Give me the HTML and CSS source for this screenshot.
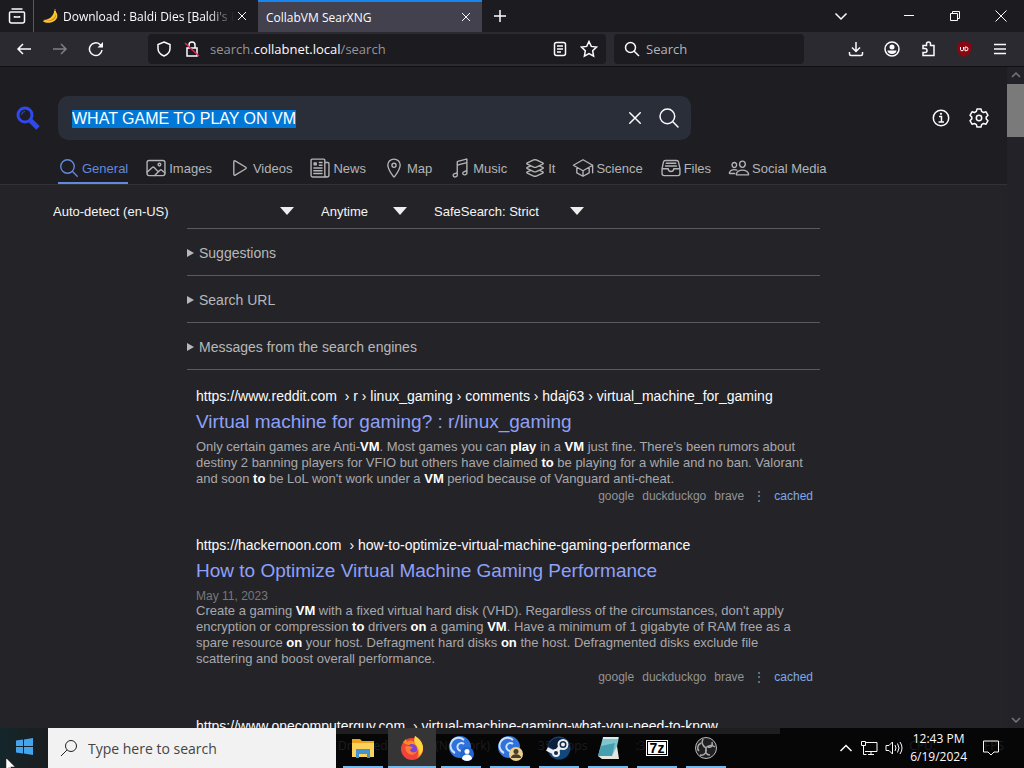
FILE: index.html
```
<!DOCTYPE html>
<html lang="en">
<head>
    <meta charset="UTF-8">
    <meta name="viewport" content="width=device-width, initial-scale=1.0">
    <title>CollabVM SearXNG</title>
    <link rel="stylesheet" href="styles.css">
</head>
<body>
    <div class="tab-bar">
        <button class="icon-btn view-btn" aria-label="Firefox View">
            <svg width="18" height="18" viewBox="0 0 18 18"><path d="M3.500 2h11M2.500 5h13q1 0 1 1v8q0 2-2 2h-11q-2 0-2-2V6q0-1 1-1zM6.500 9v1h5V9"/></svg>
        </button>
        <div class="tab">
            <svg class="banana" width="17" height="16" viewBox="0 0 17 16"><path fill="#f9c62f" d="M12 1l2 .5 0 2.500c3 4 1 9-5 10.500-3 .7-6 .2-8-1l.5-1.500C6 12 11 9 12 4z"/><path fill="#d5831d" d="M2 12.500c5 1 11-1 12-7 1 6-5 9-12 7z"/><path fill="#6b4413" d="M12 1l2 .5v1.500l-2-.3zM1 12l1.500.5-.5 1-1-.3z"/></svg>
            <span class="tab-title faded">Download : Baldi Dies [Baldi's Ba</span>
            <button class="icon-btn tab-close" aria-label="Close tab"><svg width="10" height="10" viewBox="0 0 10 10"><path d="M1 1l8 8M9 1L1 9"/></svg></button>
        </div>
        <div class="tab active">
            <span class="tab-title">CollabVM SearXNG</span>
            <button class="icon-btn tab-close" aria-label="Close tab"><svg width="10" height="10" viewBox="0 0 10 10"><path d="M1 1l8 8M9 1L1 9"/></svg></button>
        </div>
        <button class="icon-btn new-tab" aria-label="New tab"><svg width="14" height="14" viewBox="0 0 14 14"><path d="M7 1v12M1 7h12"/></svg></button>
        <div class="window-buttons">
            <button class="icon-btn list-tabs" aria-label="List all tabs"><svg width="14" height="14" viewBox="0 0 14 14"><path d="M1.500 4.500L7 10l5.500-5.500"/></svg></button>
            <button class="icon-btn" aria-label="Minimize"><svg class="thin" width="12" height="12" viewBox="0 0 12 12"><path d="M1 5.500h10"/></svg></button>
            <button class="icon-btn" aria-label="Restore"><svg class="thin" width="12" height="12" viewBox="0 0 12 12"><path d="M1.500 3.500h7v7h-7zM3.500 3.500v-2h7v7h-2"/></svg></button>
            <button class="icon-btn" aria-label="Close"><svg class="thin" width="12" height="12" viewBox="0 0 12 12"><path d="M.5.5l11 11M11.500.5l-11 11"/></svg></button>
        </div>
    </div>

    <div class="toolbar">
        <button class="icon-btn" aria-label="Back"><svg width="16" height="16" viewBox="0 0 16 16"><path d="M15 8H2M7 3L2 8l5 5"/></svg></button>
        <button class="icon-btn disabled" aria-label="Forward"><svg width="16" height="16" viewBox="0 0 16 16"><path d="M1 8h13M9 3l5 5-5 5"/></svg></button>
        <button class="icon-btn" aria-label="Reload"><svg width="16" height="16" viewBox="0 0 16 16"><path d="M14 9A6.300 6.300 0 1 1 12 3.500L14 5.500"/><path fill="currentColor" d="M15 1v5.500h-5.500z" stroke="none"/></svg></button>
        <div class="url-bar">
            <svg width="16" height="16" viewBox="0 0 16 16"><path d="M8 1l6 2.500v4c0 3.500-2.500 6-6 7.500-3.500-1.500-6-4-6-7.500v-4z"/></svg>
            <svg width="16" height="16" viewBox="0 0 16 16"><path d="M3 7h10v8H3zM5 7V4a3 3 0 0 1 6 0v3"/><path stroke="#e22850" d="M1 2l14 13"/></svg>
            <span class="url">search.<b>collabnet.local</b>/search</span>
            <svg class="reader" width="16" height="16" viewBox="0 0 16 16"><rect x="2.500" y="1.500" width="11" height="13" rx="2"/><path d="M5 5h6M5 8h6M5 11h4"/></svg>
            <svg width="18" height="18" viewBox="0 0 18 18"><path d="M9 1.500l2.300 4.900 5.200.7-3.800 3.700.9 5.300L9 13.500l-4.600 2.600.9-5.300L1.500 7.100l5.200-.7z"/></svg>
        </div>
        <div class="search-bar">
            <svg width="16" height="16" viewBox="0 0 16 16"><circle cx="6.500" cy="6.500" r="5"/><path d="M10 10l5 5"/></svg>
            <input type="text" placeholder="Search" aria-label="Search the web">
        </div>
        <div class="toolbar-end">
            <button class="icon-btn" aria-label="Downloads"><svg width="16" height="16" viewBox="0 0 16 16"><path d="M8 1v9M4 6.500l4 4 4-4M1.500 11v2q0 1.500 1.500 1.500h10q1.500 0 1.500-1.500v-2"/></svg></button>
            <button class="icon-btn" aria-label="Account"><svg width="16" height="16" viewBox="0 0 16 16"><circle cx="8" cy="8" r="7"/><circle cx="8" cy="6" r="2.500" fill="currentColor" stroke="none"/><path fill="currentColor" stroke="none" d="M3.500 9.500h9c0 2-2 3.500-4.500 3.500s-4.500-1.500-4.500-3.500z"/></svg></button>
            <button class="icon-btn" aria-label="Extensions"><svg width="16" height="16" viewBox="0 0 16 16"><path d="M6.500 4.500V3a2 2 0 0 1 4 0v1.500h3.500v10H3v-3h2a2 2 0 0 0 0-4H3v-3z"/></svg></button>
            <button class="icon-btn" aria-label="uBlock Origin"><svg width="16" height="16" viewBox="0 0 16 16"><path fill="#8a0610" stroke="none" d="M8 0l7 2.500V8c0 4-3 6.500-7 8-4-1.500-7-4-7-8V2.500z"/><path stroke="#fff" stroke-width="1" d="M4.500 6v2.500q0 1.300 1.500 1.300T7.500 8.500V6M9 6h1q2 0 2 1.900T10 9.800H9z"/></svg></button>
            <button class="icon-btn" aria-label="Menu"><svg width="14" height="14" viewBox="0 0 14 14"><path d="M1 2.500h12M1 7h12M1 11.500h12"/></svg></button>
        </div>
    </div>

    <div class="viewport">
        <div class="page">
            <header class="search-header">
                <div class="search-row">
                    <a href="#" class="logo" aria-label="SearXNG"><svg width="24" height="24" viewBox="0 0 24 24"><circle cx="9" cy="9" r="7" stroke="#3048f0" stroke-width="3"/><path stroke="#3048f0" stroke-width="1" d="M5.500 9A3.500 3.500 0 0 1 9 5.500"/><path stroke="#3048f0" stroke-width="5" d="M14.500 14.500l7.500 7.500"/></svg></a>
                    <form class="search-box">
                        <input type="text" id="q" value="WHAT GAME TO PLAY ON VM" aria-label="Search for">
                        <button type="reset" class="icon-btn" aria-label="Clear"><svg width="24" height="24" viewBox="0 0 512 512"><path d="M368 368L144 144M368 144L144 368"/></svg></button>
                        <button type="submit" class="icon-btn" aria-label="Search"><svg width="24" height="24" viewBox="0 0 512 512"><path d="M221 64a157 157 0 1 0 157 157A157 157 0 0 0 221 64zM338 338l110 110"/></svg></button>
                    </form>
                    <nav class="page-links">
                        <a href="#" aria-label="About"><svg width="20" height="20" viewBox="0 0 20 20"><circle cx="10" cy="10" r="7.700"/><path d="M8 8.500h2.500V14M7.500 14h5.500"/><circle cx="10" cy="5.800" r="1.100" fill="currentColor" stroke="none"/></svg></a>
                        <a href="#" aria-label="Preferences"><svg width="20" height="20" viewBox="0 0 20 20"><circle cx="10" cy="10" r="2.700"/><path stroke-linejoin="round" d="M8 .9h4l.6 2.500 1.900 1.100 2.500-.7 2 3.500-1.800 1.800v1.800l1.800 1.800-2 3.500-2.500-.7-1.900 1.100-.6 2.500H8l-.6-2.500-1.900-1.100-2.500.7-2-3.500 1.800-1.800V9.100L1 7.300l2-3.500 2.500.7 1.900-1.100z"/></svg></a>
                    </nav>
                </div>
                <nav class="categories">
                    <a href="#" class="selected"><svg viewBox="0 0 512 512"><path d="M221 64a157 157 0 1 0 157 157A157 157 0 0 0 221 64zM338 338l110 110"/></svg>General</a>
                    <a href="#"><svg viewBox="0 0 512 512"><rect x="48" y="80" width="416" height="352" rx="48"/><circle cx="336" cy="176" r="32"/><path d="M304 335.790l-90.660-90.490a32 32 0 0 0-43.870-1.300L48 352M224 432l123.340-123.340a32 32 0 0 1 43.110-2L464 368"/></svg>Images</a>
                    <a href="#"><svg viewBox="0 0 512 512"><path d="M112 111v290c0 17.440 17 28.520 31 20.160l247.900-148.370c12.120-7.250 12.120-26.330 0-33.580L143 90.840c-14-8.360-31 2.720-31 20.160z"/></svg>Videos</a>
                    <a href="#"><svg viewBox="0 0 512 512"><path d="M368 416V72a24 24 0 0 0-24-24H72a24 24 0 0 0-24 24v352a40 40 0 0 0 40 40h328M416 464a48 48 0 0 1-48-48V128h72a24 24 0 0 1 24 24v264a48 48 0 0 1-48 48zM240 128h64M240 192h64M112 256h192M112 320h192M112 384h192"/><path fill="currentColor" d="M120 136h48v48h-48z"/></svg>News</a>
                    <a href="#"><svg viewBox="0 0 512 512"><path d="M256 48c-79.500 0-144 61.390-144 137 0 87 96 224.870 131.250 272.490a15.770 15.770 0 0 0 25.500 0C304 409.890 400 272.070 400 185c0-75.610-64.500-137-144-137z"/><circle cx="256" cy="192" r="48"/></svg>Map</a>
                    <a href="#"><svg viewBox="0 0 512 512"><path d="M192 218v-6c0-14.840 10-27 24.240-30.590l174.590-46.680A20 20 0 0 1 416 154v22M416 296v80c0 13.910-8.930 25.590-22 30l-22 8c-25.900 8.720-52-10.420-52-38a33.370 33.370 0 0 1 23-32l51-18.150c13.070-4.400 22-15.940 22-29.850V58a10 10 0 0 0-12.600-9.610L204 102a16.480 16.480 0 0 0-12 16v226c0 13.910-8.930 25.600-22 30l-52 18c-13.880 4.680-22 17.220-22 32 0 27.580 26.520 46.550 52 38l22-8c13.070-4.400 22-16.080 22-30v-80"/></svg>Music</a>
                    <a href="#"><svg viewBox="0 0 512 512"><path d="M434.800 137.650l-149.360-68.100c-16.190-7.400-42.690-7.400-58.880 0L77.300 137.650c-17.600 8-17.600 21.090 0 29.090l148 67.500c16.890 7.700 44.690 7.700 61.580 0l148-67.500c17.520-8 17.520-21.100-.08-29.090zM160 308.520l-82.700 37.110c-17.600 8-17.600 21.100 0 29.100l148 67.500c16.890 7.690 44.690 7.690 61.580 0l148-67.500c17.600-8 17.600-21.100 0-29.100l-79.940-38.470M160 204.480l-82.800 37.160c-17.600 8-17.600 21.100 0 29.100l148 67.490c16.890 7.700 44.690 7.700 61.580 0l148-67.490c17.700-8 17.700-21.100.1-29.100L352 204.480"/></svg>It</a>
                    <a href="#"><svg viewBox="0 0 512 512"><path d="M32 192L256 64l224 128-224 128zM112 240v128l144 80 144-80V240M480 368V192M256 320v128"/></svg>Science</a>
                    <a href="#"><svg viewBox="0 0 512 512"><path d="M384 80H128c-26 0-43 14-48 40L48 272v112a48 48 0 0 0 48 48h320a48 48 0 0 0 48-48V272l-32-152c-5-27-23-40-48-40zM48 272h144M320 272h144M192 272a64 64 0 0 0 128 0M144 144h224M128 208h256"/></svg>Files</a>
                    <a href="#"><svg viewBox="0 0 512 512"><path d="M402 168c-3 41-33 72-66 72s-63-31-66-72c-3-42 26-72 66-72s69 30 66 72zM336 304c-65 0-128 32-143.500 95.400-2 8.300 3 16.600 11.700 16.600h263.600c8.600 0 13.800-8.300 11.700-16.600C464 335 401 304 336 304zM200 186c-2.300 32.500-26.700 58-53 58s-50.700-25.500-53-58c-2.400-34 21.300-58 53-58s55.400 25 53 58zM206 306c-18-8.300-38-11.400-59-11.400-52 0-102 25.800-114.600 76.200-1.700 6.600 2.500 13.200 9.300 13.200H154"/></svg>Social Media</a>
                </nav>
            </header>

            <main class="results">
                <div class="filters">
                    <select class="language" aria-label="Language"><option>Auto-detect (en-US)</option></select>
                    <select class="time-range" aria-label="Time range"><option>Anytime</option></select>
                    <select class="safesearch" aria-label="SafeSearch"><option>SafeSearch: Strict</option></select>
                </div>
                <div class="column">
                    <details><summary>Suggestions</summary></details>
                    <details><summary>Search URL</summary></details>
                    <details><summary>Messages from the search engines</summary></details>

                    <article class="result">
                        <a href="#" class="result-url"><span>https://www.reddit.com</span> › r › linux_gaming › comments › hdaj63 › virtual_machine_for_gaming</a>
                        <h3><a href="#">Virtual machine for gaming? : r/linux_gaming</a></h3>
                        <p class="content">Only certain games are Anti-<b>VM</b>. Most games you can <b>play</b> in a <b>VM</b> just fine. There's been rumors about<br>destiny 2 banning players for VFIO but others have claimed <b>to</b> be playing for a while and no ban. Valorant<br>and soon <b>to</b> be LoL won't work under a <b>VM</b> period because of Vanguard anti-cheat.</p>
                        <div class="engines"><span>google</span><span>duckduckgo</span><span>brave</span><span class="dots">⋮</span><a href="#">cached</a></div>
                    </article>

                    <article class="result">
                        <a href="#" class="result-url"><span>https://hackernoon.com</span> › how-to-optimize-virtual-machine-gaming-performance</a>
                        <h3><a href="#">How to Optimize Virtual Machine Gaming Performance</a></h3>
                        <time datetime="2023-05-11">May 11, 2023</time>
                        <p class="content">Create a gaming <b>VM</b> with a fixed virtual hard disk (VHD). Regardless of the circumstances, don't apply<br>encryption or compression <b>to</b> drivers <b>on</b> a gaming <b>VM</b>. Have a minimum of 1 gigabyte of RAM free as a<br>spare resource <b>on</b> your host. Defragment hard disks <b>on</b> the host. Defragmented disks exclude file<br>scattering and boost overall performance.</p>
                        <div class="engines"><span>google</span><span>duckduckgo</span><span>brave</span><span class="dots">⋮</span><a href="#">cached</a></div>
                    </article>

                    <article class="result">
                        <a href="#" class="result-url"><span>https://www.onecomputerguy.com</span> › virtual-machine-gaming-what-you-need-to-know</a>
                    </article>
                </div>
            </main>
        </div>
        <div class="scrollbar">
            <svg width="10" height="8" viewBox="0 0 10 8"><path d="M1 6l4-4 4 4"/></svg>
            <div class="thumb"></div>
            <svg width="10" height="8" viewBox="0 0 10 8"><path d="M1 2l4 4 4-4"/></svg>
        </div>
    </div>

    <footer class="taskbar">
        <div class="ghost-status"><span>Dropped Frames (Network)</span><span>35 drops</span><span>:39</span><span>CPU:</span><span>FPS</span></div>
        <button class="start" aria-label="Start"><svg width="17" height="17" viewBox="0 0 17 17"><path fill="#45a5ec" stroke="none" d="M0 2.500l7-1V8H0zM8 1.400L17 0v8H8zM0 9h7v6.500l-7-1zM8 9h9v8l-9-1.400z"/></svg></button>
        <label class="task-search">
            <svg width="18" height="18" viewBox="0 0 18 18"><circle cx="11" cy="7" r="5.500"/><path d="M7 11l-6 6"/></svg>
            <input type="text" placeholder="Type here to search">
        </label>
        <div class="apps">
            <button aria-label="File Explorer"><svg viewBox="0 0 26 26"><path fill="#e9a520" d="M2 4h8l2 2h12v4H2z"/><path fill="#fbd15b" d="M2 8h22v14H2z"/><path fill="#4293cf" d="M6 14h14v9h-3v-4H9v4H6z"/></svg></button>
            <button class="current" aria-label="Firefox"><svg viewBox="0 0 26 26"><circle cx="13" cy="14" r="11" fill="#f0433b"/><path fill="#ff8b25" d="M4 7l3-3 1 3c3-2 5-2 7 0l1-6c5 3 8 8 8 13 0 4-3 8-6 9 2-5 1-9-2-11-4-3-9-1-12-5z"/><path fill="#ffd53f" d="M16 1c5 3 8 7 8 12 0 3-2 6-4 8 1-5-1-9-3-11-2-3-2-6-1-9z"/><circle cx="13" cy="14" r="5" fill="#7b43d6"/><path fill="#ff7a2e" d="M6 12c3-2 6 0 8 0l-3 3c1 3 5 3 7 1-2 6-11 5-12-4z"/></svg></button>
            <button aria-label="CollabVM Client"><svg viewBox="0 0 26 26"><circle cx="12" cy="12" r="11" fill="#2f73da"/><path fill="none" stroke="#cfe1ff" stroke-width="2" d="M16 5A8 8 0 1 0 7 18M16 9a4 4 0 1 0-3 7"/><circle cx="19" cy="19" r="7" fill="#2364cf"/><circle cx="19" cy="16.500" r="2.500" fill="#fff"/><path fill="#fff" d="M14 24c0-6 10-6 10 0-3 2.500-7 2.500-10 0z"/></svg></button>
            <button aria-label="CollabVM Admin"><svg viewBox="0 0 26 26"><circle cx="12" cy="12" r="11" fill="#2f73da"/><path fill="none" stroke="#cfe1ff" stroke-width="2" d="M16 5A8 8 0 1 0 7 18M16 9a4 4 0 1 0-3 7"/><circle cx="19" cy="19" r="7" fill="#ecd08d"/><circle cx="19" cy="16.500" r="2.500" fill="#4a3b2c"/><path fill="#4a3b2c" d="M14 23c0-5 10-5 10 0z"/></svg></button>
            <button aria-label="Steam"><svg viewBox="0 0 26 26"><circle cx="13" cy="13" r="11.500" fill="#12477c"/><path fill="#0b1e3b" d="M2 11a11.500 11.500 0 0 1 22 0c-6 5-14 6-22 0z"/><path stroke="#eee" stroke-width="4" d="M1 14l8 4 7-8"/><circle cx="17" cy="9.500" r="4.500" fill="#12294b" stroke="#eee" stroke-width="2"/><circle cx="17" cy="9.500" r="2" fill="#eee"/><circle cx="10" cy="18" r="3" fill="#12294b" stroke="#eee" stroke-width="2"/></svg></button>
            <button aria-label="Notepad"><svg viewBox="0 0 26 26"><path fill="#81c4ce" d="M8 2h16l-4 19H3z"/><path fill="#459fae" d="M6 11l14-3-3 13H3z"/><path stroke="#d5eef1" stroke-width="2" d="M8 3h15"/><path fill="#e6e6de" d="M3 21l14 0 5-10 2 13H7z"/></svg></button>
            <button aria-label="7-Zip"><svg viewBox="0 0 26 26"><path fill="#fff" d="M2 5h22v16H2z"/><path fill="#000" d="M3 6h20v14H3z"/><path fill="#fff" d="M4 7h18v12H4z"/><text class="zip" x="13" y="18" text-anchor="middle">7z</text></svg></button>
            <button aria-label="OBS Studio"><svg viewBox="0 0 26 26"><circle cx="13" cy="13" r="10.500" fill="#202023" stroke="#bbb" stroke-width="1"/><g fill="none" stroke="#aaa" stroke-width="1.500"><path d="M10 4c-2 4 0 7 3 9M22 12c-4-3-8-1-9 1M7 20c5 1 7-3 6-7M8 8c-4 2-4 6-2 8M19 7c1 4-1 6-4 5M17 20c-4 0-5-3-4-6"/></g></svg></button>
        </div>
        <div class="tray">
            <svg class="expand" width="14" height="14" viewBox="0 0 14 14"><path d="M1.500 10L7 4.500l5.500 5.500"/></svg>
            <svg width="18" height="16" viewBox="0 0 18 16"><path d="M5 2.500h12v9H5M8 14.500h6M11 11.500v3M1.500 1.500h4v4h-4zM3.500 5.500v9h3"/></svg>
            <svg width="18" height="16" viewBox="0 0 18 16"><path d="M1 5.500h3L7.500 2v12L4 10.500H1zM10 5q2 3 0 6M12.500 3.500q3 4.500 0 9M15 2q4 6 0 12"/></svg>
            <div class="clock"><span>12:43 PM</span><span>6/19/2024</span></div>
            <svg width="18" height="18" viewBox="0 0 18 18"><path d="M1.500 2h15v11H12l-3 3-3-3H1.500z"/></svg>
        </div>
    </footer>
    <svg class="cursor" width="12" height="18" viewBox="0 0 12 18"><path fill="#fff" stroke="#222" d="M.5.5v15l3.500-3 3 6 2.500-1-3-6h5z"/></svg>

    <script>
        const query = document.getElementById('q');
        query.focus();
        query.select();
    </script>
</body>
</html>
```
FILE: styles.css
```
* {
    margin: 0;
    padding: 0;
    box-sizing: border-box;
}

body {
    display: flex;
    flex-direction: column;
    height: 100vh;
    overflow: hidden;
    background-color: #1e1e22;
    color: #fbfbfe;
    font-family: "Open Sans", "Noto Sans", sans-serif;
    font-size: 12px;
}

svg {
    flex-shrink: 0;
    fill: none;
    stroke: currentColor;
    stroke-width: 1.5;
}

svg.thin {
    stroke-width: 1;
}

a {
    color: inherit;
    text-decoration: none;
}

input, button, select {
    font: inherit;
    color: inherit;
    background: none;
    border: none;
    outline: none;
}

.icon-btn {
    display: flex;
    align-items: center;
    justify-content: center;
}

/* Browser tabs */
.tab-bar {
    display: flex;
    height: 32px;
    flex-shrink: 0;
    background-color: #1c1b20;
}

.view-btn {
    width: 34px;
    border-right: 1px solid #59585f;
}

.tab {
    display: flex;
    align-items: center;
    width: 224px;
    padding: 0 8px;
    gap: 4px;
}

.tab.active {
    background-color: #42414d;
    border-top: 2px solid #1687f0;
}

.banana {
    stroke: none;
}

.tab-title {
    flex: 1;
    overflow: hidden;
    white-space: nowrap;
}

.tab-title.faded {
    margin-right: -4px;
    mask-image: linear-gradient(to right, #000 85%, transparent);
}

.tab-close {
    width: 16px;
    height: 16px;
}

.tab-close svg {
    stroke-width: 1;
}

.new-tab {
    width: 36px;
}

.window-buttons {
    display: flex;
    margin-left: auto;
}

.window-buttons .icon-btn {
    width: 46px;
}

.window-buttons .list-tabs {
    width: 36px;
    margin-right: 27px;
}

/* Navigation toolbar */
.toolbar {
    display: flex;
    align-items: center;
    height: 35px;
    flex-shrink: 0;
    padding: 0 6px;
    background-color: #2b2a30;
    border-bottom: 1px solid #101014;
}

.toolbar .icon-btn {
    width: 36px;
    height: 32px;
}

.disabled {
    opacity: 0.4;
}

.url-bar, .search-bar {
    display: flex;
    align-items: center;
    height: 30px;
    background-color: #1c1b20;
    border-radius: 4px;
}

.url-bar {
    flex: 1;
    gap: 12px;
    margin-left: 34px;
    padding: 0 8px;
}

.url {
    flex: 1;
    margin-left: -2px;
    color: #96959b;
    font-size: 13px;
}

.url b {
    color: #fbfbfe;
    font-weight: normal;
}

.search-bar {
    width: 190px;
    gap: 6px;
    margin-left: 8px;
    padding: 0 10px;
}

.search-bar input {
    width: 100%;
    font-size: 13px;
}

.search-bar input::placeholder {
    color: #b5b4ba;
}

.toolbar-end {
    display: flex;
    margin-left: 34px;
}

/* Search page */
.viewport {
    display: flex;
    flex: 1;
    min-height: 0;
    font-family: "Liberation Sans", Arial, sans-serif;
}

.page {
    flex: 1;
    min-width: 0;
    overflow: hidden;
    background-color: #242428;
}

.search-header {
    padding-top: 29px;
    background-color: #1e1e22;
    border-bottom: 1px solid #333337;
}

.search-row {
    display: flex;
    align-items: center;
    height: 44px;
}

.logo {
    display: flex;
    width: 58px;
    padding-left: 16px;
}

.search-box {
    display: flex;
    align-items: center;
    width: 633px;
    height: 44px;
    padding: 0 10px 0 14px;
    gap: 10px;
    background-color: #2a2e38;
    border-radius: 10px;
}

.search-box input {
    flex: 1;
    padding-top: 2px;
    font-size: 16px;
}

.search-box input::selection {
    background-color: #0078d7;
    color: #fff;
}

.search-box svg, .categories svg {
    stroke-width: 32;
    stroke-linecap: round;
    stroke-linejoin: round;
}

.page-links {
    display: flex;
    gap: 18px;
    margin-left: auto;
    padding-right: 18px;
}

.page-links svg {
    display: block;
}

.categories {
    display: flex;
    gap: 17px;
    margin-left: 58px;
    padding-top: 14px;
    color: #b4b4b6;
    font-size: 13px;
}

.categories a {
    display: flex;
    align-items: center;
    gap: 2px;
    height: 30px;
    border-bottom: 2px solid transparent;
    white-space: nowrap;
}

.categories svg {
    width: 22px;
    height: 22px;
}

.categories .selected {
    color: #6389dc;
    border-bottom-color: #6389dc;
}

.filters {
    display: flex;
    gap: 27px;
    margin-left: 53px;
    padding: 16px 0 7px;
    color: #f4f4f5;
    font-size: 13px;
}

.filters select {
    height: 20px;
    appearance: none;
    background: url("data:image/svg+xml,%3Csvg xmlns='http://www.w3.org/2000/svg' width='14' height='8'%3E%3Cpath fill='%23eee' d='M0 0h14L7 8z'/%3E%3C/svg%3E") no-repeat right center;
}

.language {
    width: 241px;
}

.time-range {
    width: 86px;
}

.safesearch {
    width: 150px;
}

.column {
    width: 633px;
    margin-left: 187px;
    border-top: 1px solid #5a5a5e;
}

details {
    border-bottom: 1px solid #5a5a5e;
    color: #b8b8ba;
    font-size: 14px;
}

summary {
    display: flex;
    align-items: center;
    gap: 5px;
    height: 46px;
    padding-top: 1px;
}

summary::before {
    content: "";
    border-left: 7px solid #b8b8ba;
    border-top: 4px solid transparent;
    border-bottom: 4px solid transparent;
}

.result {
    padding: 16px 7px 16px 9px;
}

.result + .result {
    padding-top: 15px;
}

.result-url {
    display: block;
    font-size: 14px;
    line-height: 21px;
    white-space: nowrap;
}

.result-url span {
    margin-right: 4px;
}

.result h3 {
    color: #8fa0f8;
    font-size: 19px;
    font-weight: normal;
    line-height: 30px;
}

.result time {
    display: block;
    margin-top: 3px;
    color: #78787b;
    font-size: 12px;
    line-height: 14px;
}

.content {
    padding-top: 2px;
    color: #a8a8ab;
    font-size: 13px;
    line-height: 16px;
}

time + .content {
    padding: 0 0 1px;
}

.content b {
    color: #fff;
}

.engines {
    display: flex;
    justify-content: flex-end;
    gap: 8px;
    margin-top: 1px;
    color: #939396;
    font-size: 12px;
    line-height: 16px;
}

.dots {
    width: 14px;
    text-align: center;
}

.engines a {
    color: #7fa8e8;
}

.scrollbar {
    display: flex;
    flex-direction: column;
    align-items: center;
    width: 17px;
    padding: 4px 0;
    background-color: #222228;
    color: #77777b;
}

.thumb {
    width: 17px;
    height: 53px;
    margin: 5px 0 auto;
    background-color: #7a7a7a;
}

/* Windows taskbar */
.taskbar {
    position: relative;
    display: flex;
    height: 40px;
    flex-shrink: 0;
    background: linear-gradient(#1e1e20, #1e1e20) no-repeat left top / 780px 6px #060607;
}

/* Status bar of the window behind, showing through the taskbar */
.ghost-status {
    position: absolute;
    inset: 8px 20px auto 338px;
    display: flex;
    gap: 48px;
    color: #1d1d20;
    line-height: 20px;
}

.ghost-status span:nth-child(4) {
    margin-left: auto;
}

.start {
    width: 48px;
    background: linear-gradient(to right, #14262b, #1b1d1f);
}

.task-search {
    position: relative;
    display: flex;
    align-items: center;
    width: 288px;
    gap: 10px;
    padding: 0 12px;
    background-color: #f2f2f2;
    color: #222;
}

.task-search svg {
    stroke-width: 1;
}

.task-search input {
    flex: 1;
    font-size: 14px;
}

.task-search input::placeholder {
    color: #444;
}

.apps {
    position: relative;
    display: flex;
    gap: 1px;
    margin-left: 3px;
}

.apps button {
    display: flex;
    align-items: center;
    justify-content: center;
    width: 48px;
    background: linear-gradient(#76b9ed, #76b9ed) no-repeat center bottom / 40px 2px;
}

.apps .current {
    background-color: #353535;
    background-size: 48px 2px;
}

.apps svg {
    width: 26px;
    height: 26px;
    stroke: none;
}

.zip {
    fill: #000;
    font: bold 14px "Liberation Sans", Arial, sans-serif;
}

.tray {
    position: relative;
    display: flex;
    align-items: center;
    gap: 7px;
    margin-left: auto;
    padding-right: 24px;
}

.tray svg {
    stroke-width: 1;
}

.tray .expand {
    stroke-width: 1.5;
}

.clock {
    display: flex;
    flex-direction: column;
    align-items: center;
    margin-right: 8px;
    line-height: 18px;
}

.cursor {
    position: absolute;
    left: 5px;
    bottom: -6px;
}
```
